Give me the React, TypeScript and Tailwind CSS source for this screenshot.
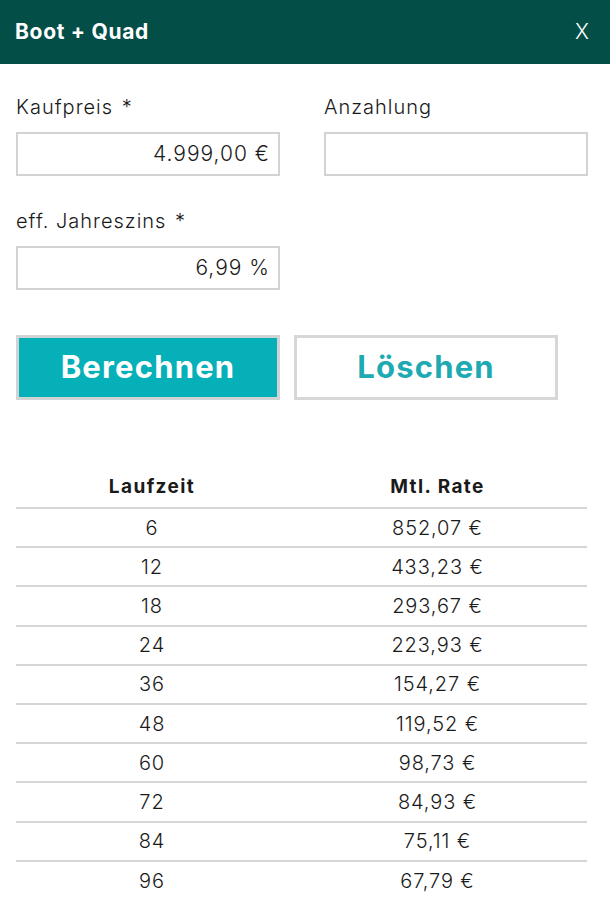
import React from "react";

const rows: [string, string][] = [
  ["6", "852,07 €"],
  ["12", "433,23 €"],
  ["18", "293,67 €"],
  ["24", "223,93 €"],
  ["36", "154,27 €"],
  ["48", "119,52 €"],
  ["60", "98,73 €"],
  ["72", "84,93 €"],
  ["84", "75,11 €"],
  ["96", "67,79 €"],
];

export default function App() {
  return (
    <div className="w-[610px] min-h-[897px] bg-white text-[#1a1a1a] font-light" style={{ fontFamily: "Inter, 'Noto Sans', sans-serif" }}>
      <div className="h-16 bg-[#034e47] flex items-center justify-between pl-[15px] pr-[21px] text-white">
        <span className="text-[21px] font-bold tracking-[0.7px]">Boot + Quad</span>
        <span className="text-[21px] font-light">X</span>
      </div>
      <div className="px-4">
        <div className="grid grid-cols-[264px_264px] gap-x-[44px] pt-[30px]">
          <div>
            <div className="text-[20px] h-[26px] leading-[26px] tracking-[1px]">Kaufpreis <span className="ml-[2px]">*</span></div>
            <div className="mt-[12px] h-[44px] border-2 border-[#d3d3d3] flex items-center justify-end pr-[8px] text-[21px] tracking-[1px]">4.999,00 €</div>
          </div>
          <div>
            <div className="text-[20px] h-[26px] leading-[26px] tracking-[1px]">Anzahlung</div>
            <div className="mt-[12px] h-[44px] border-2 border-[#d3d3d3]"></div>
          </div>
        </div>
        <div className="mt-[32px] w-[264px]">
          <div className="text-[20px] h-[26px] leading-[26px] tracking-[1px]">eff. Jahreszins <span className="ml-[2px]">*</span></div>
          <div className="mt-[12px] h-[44px] border-2 border-[#d3d3d3] flex items-center justify-end pr-[8px] text-[21px] tracking-[1px]">6,99 %</div>
        </div>
        <div className="mt-[45px] flex gap-[14px]">
          <button className="w-[264px] h-[65px] border-[3px] border-[#d0d4d4] bg-[#06b0b8] text-white text-[31px] font-bold tracking-[1.2px]">Berechnen</button>
          <button className="w-[264px] h-[65px] border-[3px] border-[#d7d7d7] bg-white text-[#1daab2] text-[31px] font-bold tracking-[1.2px]">Löschen</button>
        </div>
        <div className="mt-[68px] w-[571px]">
          <div className="grid grid-cols-[272px_299px] h-[41px] items-center border-b-2 border-[#d6d6d6] text-[19px] font-bold tracking-[1.4px]">
            <div className="text-center">Laufzeit</div>
            <div className="text-center">Mtl. Rate</div>
          </div>
          {rows.map(([a, b], i) => (
            <div
              key={a}
              className={
                i < rows.length - 1
                  ? "grid grid-cols-[272px_299px] h-[39.2px] items-center border-b-2 border-[#d6d6d6] text-[20px] tracking-[0.9px]"
                  : "grid grid-cols-[272px_299px] h-[39.2px] items-center text-[20px] tracking-[0.9px]"
              }
            >
              <div className="text-center">{a}</div>
              <div className="text-center">{b}</div>
            </div>
          ))}
        </div>
      </div>
    </div>
  );
}
